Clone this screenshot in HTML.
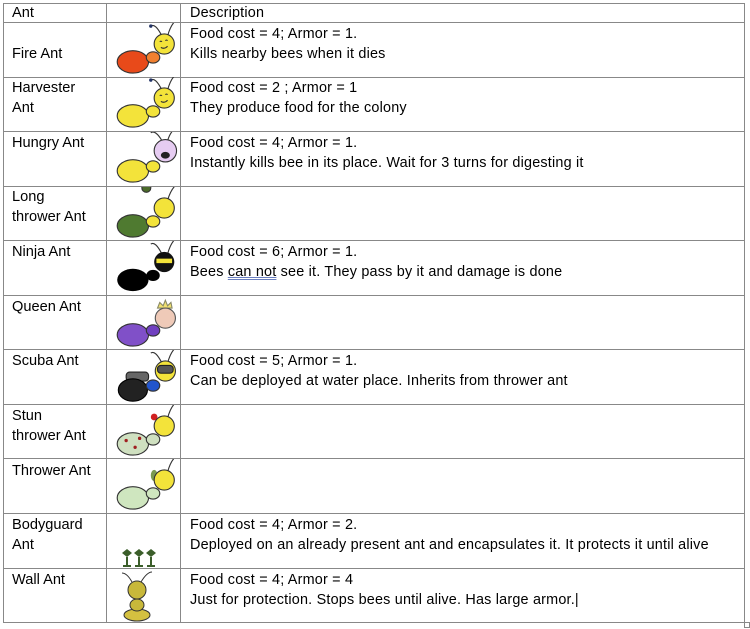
<html><head><style>
body{margin:0;width:750px;height:629px;background:#fff;font-family:"Liberation Sans",sans-serif;font-size:14.6px;color:#000;position:relative;overflow:hidden}
.h{position:absolute;background:#888;height:1px}
.v{position:absolute;background:#888;width:1px;top:3px;height:620px}
.t{position:absolute;line-height:19.5px;white-space:nowrap}
.d{font-size:14.4px;letter-spacing:0.2px}
svg{position:absolute}
</style></head><body>
<div class="v" style="left:3px"></div><div class="v" style="left:106px"></div><div class="v" style="left:180px"></div><div class="v" style="left:744px"></div>
<div class="h" style="top:3px;left:3px;width:742px"></div>
<div class="h" style="top:22px;left:3px;width:742px"></div>
<div class="h" style="top:77px;left:3px;width:742px"></div>
<div class="h" style="top:131px;left:3px;width:742px"></div>
<div class="h" style="top:186px;left:3px;width:742px"></div>
<div class="h" style="top:240px;left:3px;width:742px"></div>
<div class="h" style="top:295px;left:3px;width:742px"></div>
<div class="h" style="top:349px;left:3px;width:742px"></div>
<div class="h" style="top:404px;left:3px;width:742px"></div>
<div class="h" style="top:458px;left:3px;width:742px"></div>
<div class="h" style="top:513px;left:3px;width:742px"></div>
<div class="h" style="top:568px;left:3px;width:742px"></div>
<div class="h" style="top:622px;left:3px;width:742px"></div>
<div style="position:absolute;left:744px;top:622px;width:4px;height:4px;border:1px solid #888"></div>

<div class="t" style="left:12px;top:4px">Ant</div>
<div class="t d" style="left:190px;top:4px">Description</div>

<div class="t" style="left:12px;top:45px">Fire Ant</div>
<div class="t" style="left:12px;top:79px">Harvester<br>Ant</div>
<div class="t" style="left:12px;top:134px">Hungry Ant</div>
<div class="t" style="left:12px;top:188px">Long<br>thrower Ant</div>
<div class="t" style="left:12px;top:243px">Ninja Ant</div>
<div class="t" style="left:12px;top:298px">Queen Ant</div>
<div class="t" style="left:12px;top:352px">Scuba Ant</div>
<div class="t" style="left:12px;top:407px">Stun<br>thrower Ant</div>
<div class="t" style="left:12px;top:462px">Thrower Ant</div>
<div class="t" style="left:12px;top:516px">Bodyguard<br>Ant</div>
<div class="t" style="left:12px;top:571px">Wall Ant</div>

<div class="t d" style="left:190px;top:25px">Food cost = 4; Armor = 1.<br>Kills nearby bees when it dies</div>
<div class="t d" style="left:190px;top:79px">Food cost = 2 ; Armor = 1<br>They produce food for the colony</div>
<div class="t d" style="left:190px;top:134px">Food cost = 4; Armor = 1.<br>Instantly kills bee in its place. Wait for 3 turns for digesting it</div>
<div class="t d" style="left:190px;top:243px">Food cost = 6; Armor = 1.<br>Bees <span style="text-decoration:underline double #6a7fc0">can not</span> see it. They pass by it and damage is done</div>
<div class="t d" style="left:190px;top:352px">Food cost = 5; Armor = 1.<br>Can be deployed at water place. Inherits from thrower ant</div>
<div class="t d" style="left:190px;top:516px">Food cost = 4; Armor = 2.<br>Deployed on an already present ant and encapsulates it. It protects it until alive</div>
<div class="t d" style="left:190px;top:571px">Food cost = 4; Armor = 4<br>Just for protection. Stops bees until alive. Has large armor.|</div>

<svg width="74" height="54" style="left:110px;top:23px"><g transform="translate(-4,-7) scale(1.12)"><path d="M50 18 Q44 6 40 9 M55 18 Q58 6 65 2" stroke="#333" fill="none"/><circle cx="40" cy="9" r="1.5" fill="#236"/><circle cx="65" cy="2" r="1.5" fill="#236"/><ellipse cx="24" cy="41" rx="14" ry="10" fill="#e84a1a" stroke="#333"/><ellipse cx="42" cy="37" rx="6" ry="5" fill="#f08030" stroke="#333"/><circle cx="52" cy="25" r="9" fill="#f3e33a" stroke="#333"/><path d="M48 23 q1-1 2 0 M53 22 q1-1 2 0 M49 28 q3 2 6-1" stroke="#333" fill="none"/></g></svg>
<svg width="74" height="54" style="left:110px;top:77px"><g transform="translate(-4,-7) scale(1.12)"><path d="M50 18 Q44 6 40 9 M55 18 Q58 6 65 2" stroke="#333" fill="none"/><circle cx="40" cy="9" r="1.5" fill="#236"/><circle cx="65" cy="2" r="1.5" fill="#236"/><ellipse cx="24" cy="41" rx="14" ry="10" fill="#f3e33a" stroke="#333"/><ellipse cx="42" cy="37" rx="6" ry="5" fill="#f3e33a" stroke="#333"/><circle cx="52" cy="25" r="9" fill="#f3e33a" stroke="#333"/><path d="M48 23 q1-1 2 0 M53 22 q1-1 2 0 M49 28 q3 2 6-1" stroke="#333" fill="none"/></g></svg>
<svg width="74" height="54" style="left:110px;top:132px"><g transform="translate(-4,-7) scale(1.12)"><path d="M50 14 Q44 4 40 7 M55 14 Q58 4 65 1" stroke="#333" fill="none"/><ellipse cx="24" cy="41" rx="14" ry="10" fill="#f3e33a" stroke="#333"/><ellipse cx="42" cy="37" rx="6" ry="5" fill="#f3e33a" stroke="#333"/><circle cx="53" cy="23" r="10" fill="#e6ccf2" stroke="#333"/><ellipse cx="53" cy="27" rx="4" ry="3" fill="#222"/></g></svg>
<svg width="74" height="54" style="left:110px;top:187px"><g transform="translate(-4,-7) scale(1.12)"><circle cx="36" cy="7" r="4" fill="#4b6b2a" stroke="#333"/><path d="M55 18 Q58 8 63 4" stroke="#333" fill="none"/><ellipse cx="24" cy="41" rx="14" ry="10" fill="#4f7a30" stroke="#333"/><ellipse cx="42" cy="37" rx="6" ry="5" fill="#f3e33a" stroke="#333"/><circle cx="52" cy="25" r="9" fill="#f3e33a" stroke="#333"/></g></svg>
<svg width="74" height="54" style="left:110px;top:241px"><g transform="translate(-4,-7) scale(1.12)"><path d="M50 18 Q44 6 40 9 M55 18 Q58 6 65 2" stroke="#333" fill="none"/><ellipse cx="24" cy="41" rx="14" ry="10" fill="#000"/><ellipse cx="42" cy="37" rx="6" ry="5" fill="#000"/><circle cx="52" cy="25" r="9" fill="#111"/><rect x="45" y="22" width="14" height="4" fill="#f3e33a"/></g></svg>
<svg width="74" height="54" style="left:110px;top:296px"><g transform="translate(-4,-7) scale(1.12)"><path d="M46 17 l2-5 3 3 2-5 2 5 3-3 1 5z" fill="#f0e070" stroke="#886"/><ellipse cx="24" cy="41" rx="14" ry="10" fill="#8050c8" stroke="#333"/><ellipse cx="42" cy="37" rx="6" ry="5" fill="#7040c0" stroke="#333"/><circle cx="53" cy="26" r="9" fill="#efcab8" stroke="#555"/></g></svg>
<svg width="74" height="54" style="left:110px;top:350px"><g transform="translate(-4,-7) scale(1.12)"><path d="M50 18 Q44 6 40 9 M55 18 Q58 6 65 2" stroke="#333" fill="none"/><rect x="18" y="26" width="20" height="8" rx="3" fill="#666" stroke="#222"/><ellipse cx="24" cy="42" rx="13" ry="10" fill="#222" stroke="#000"/><ellipse cx="42" cy="38" rx="6" ry="5" fill="#2255cc" stroke="#333"/><circle cx="53" cy="25" r="9" fill="#f3e33a" stroke="#333"/><rect x="46" y="20" width="14" height="7" rx="3" fill="#555" stroke="#222"/></g></svg>
<svg width="74" height="54" style="left:110px;top:405px"><g transform="translate(-4,-7) scale(1.12)"><circle cx="43" cy="17" r="3" fill="#d02020"/><path d="M55 18 Q58 6 65 2" stroke="#333" fill="none"/><ellipse cx="24" cy="41" rx="14" ry="10" fill="#cfe0c0" stroke="#333"/><circle cx="18" cy="38" r="1.5" fill="#a02020"/><circle cx="26" cy="44" r="1.5" fill="#a02020"/><circle cx="30" cy="36" r="1.5" fill="#a02020"/><ellipse cx="42" cy="37" rx="6" ry="5" fill="#cfe0c0" stroke="#333"/><circle cx="52" cy="25" r="9" fill="#f3e33a" stroke="#333"/></g></svg>
<svg width="74" height="54" style="left:110px;top:459px"><g transform="translate(-4,-7) scale(1.12)"><path d="M55 18 Q58 6 65 2" stroke="#333" fill="none"/><ellipse cx="43" cy="21" rx="3" ry="5" fill="#7a9a50"/><ellipse cx="24" cy="41" rx="14" ry="10" fill="#cfe6bf" stroke="#333"/><ellipse cx="42" cy="37" rx="6" ry="5" fill="#cfe6bf" stroke="#333"/><circle cx="52" cy="25" r="9" fill="#f3e33a" stroke="#333"/></g></svg>
<svg width="74" height="54" style="left:107px;top:514px"><g fill="#3b5e2a"><path d="M20 35 l5 4 -5 4 -5-4z M19 43h2v8h-2z M16 51h8v2h-8z"/><path d="M32 35 l5 4 -5 4 -5-4z M31 43h2v8h-2z M28 51h8v2h-8z"/><path d="M44 35 l5 4 -5 4 -5-4z M43 43h2v8h-2z M40 51h8v2h-8z"/></g></svg>
<svg width="74" height="54" style="left:107px;top:569px"><path d="M25 13 Q20 4 15 4 M34 13 Q40 3 45 3" stroke="#333" fill="none"/><ellipse cx="30" cy="46" rx="13" ry="6" fill="#d4c040" stroke="#333"/><ellipse cx="30" cy="36" rx="7" ry="6" fill="#c8b83a" stroke="#333"/><circle cx="30" cy="21" r="9" fill="#c8b83a" stroke="#333"/></svg>
</body></html>
